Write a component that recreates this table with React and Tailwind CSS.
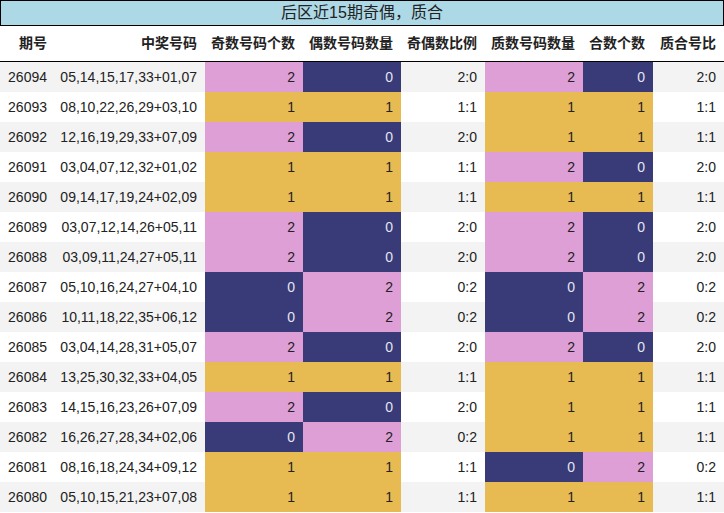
const rows = [
  ['26094', '05,14,15,17,33+01,07', 2, 0, '2:0', 2, 0, '2:0'],
  ['26093', '08,10,22,26,29+03,10', 1, 1, '1:1', 1, 1, '1:1'],
  ['26092', '12,16,19,29,33+07,09', 2, 0, '2:0', 1, 1, '1:1'],
  ['26091', '03,04,07,12,32+01,02', 1, 1, '1:1', 2, 0, '2:0'],
  ['26090', '09,14,17,19,24+02,09', 1, 1, '1:1', 1, 1, '1:1'],
  ['26089', '03,07,12,14,26+05,11', 2, 0, '2:0', 2, 0, '2:0'],
  ['26088', '03,09,11,24,27+05,11', 2, 0, '2:0', 2, 0, '2:0'],
  ['26087', '05,10,16,24,27+04,10', 0, 2, '0:2', 0, 2, '0:2'],
  ['26086', '10,11,18,22,35+06,12', 0, 2, '0:2', 0, 2, '0:2'],
  ['26085', '03,04,14,28,31+05,07', 2, 0, '2:0', 2, 0, '2:0'],
  ['26084', '13,25,30,32,33+04,05', 1, 1, '1:1', 1, 1, '1:1'],
  ['26083', '14,15,16,23,26+07,09', 2, 0, '2:0', 1, 1, '1:1'],
  ['26082', '16,26,27,28,34+02,06', 0, 2, '0:2', 1, 1, '1:1'],
  ['26081', '08,16,18,24,34+09,12', 1, 1, '1:1', 0, 2, '0:2'],
  ['26080', '05,10,15,21,23+07,08', 1, 1, '1:1', 1, 1, '1:1'],
];

const headers = ['期号', '中奖号码', '奇数号码个数', '偶数号码数量', '奇偶数比例', '质数号码数量', '合数个数', '质合号比'];

// value -> cell colour (tab20b-ish palette)
const cellColor = {
  0: 'bg-[#393b79] text-[#e4e4ee]',
  1: 'bg-[#e7ba52] text-[#222]',
  2: 'bg-[#de9ed6] text-[#222]',
};

const grid = 'grid grid-cols-[55px_150px_98px_98px_84px_98px_70px_71px]';

function NumCell({ v }) {
  return <div className={`${cellColor[v]} flex items-center justify-end pr-2`}>{v}</div>;
}

export default function App() {
  return (
    <div
      className="w-[724px] h-[513px] bg-white text-[14px] text-[#222]"
      style={{ fontFamily: '"Liberation Sans", "Noto Sans CJK SC", sans-serif' }}
    >
      <div className="h-[26px] bg-[#add8e6] border border-black flex items-center justify-center text-[16px] text-[#222]">
        后区近15期奇偶，质合
      </div>

      <div className={`${grid} h-[36px] border-b border-black font-bold`}>
        {headers.map((h) => (
          <div key={h} className="flex items-center justify-end pr-2 whitespace-nowrap">
            {h}
          </div>
        ))}
      </div>

      {rows.map((r, i) => {
        const bg = i % 2 === 0 ? 'bg-[#f3f3f3]' : 'bg-white';
        return (
          <div key={r[0]} className={`${grid} h-[30px]`}>
            <div className={`${bg} flex items-center justify-end pr-2`}>{r[0]}</div>
            <div className={`${bg} flex items-center justify-end pr-2`}>{r[1]}</div>
            <NumCell v={r[2]} />
            <NumCell v={r[3]} />
            <div className={`${bg} flex items-center justify-end pr-2`}>{r[4]}</div>
            <NumCell v={r[5]} />
            <NumCell v={r[6]} />
            <div className={`${bg} flex items-center justify-end pr-2`}>{r[7]}</div>
          </div>
        );
      })}
    </div>
  );
}
